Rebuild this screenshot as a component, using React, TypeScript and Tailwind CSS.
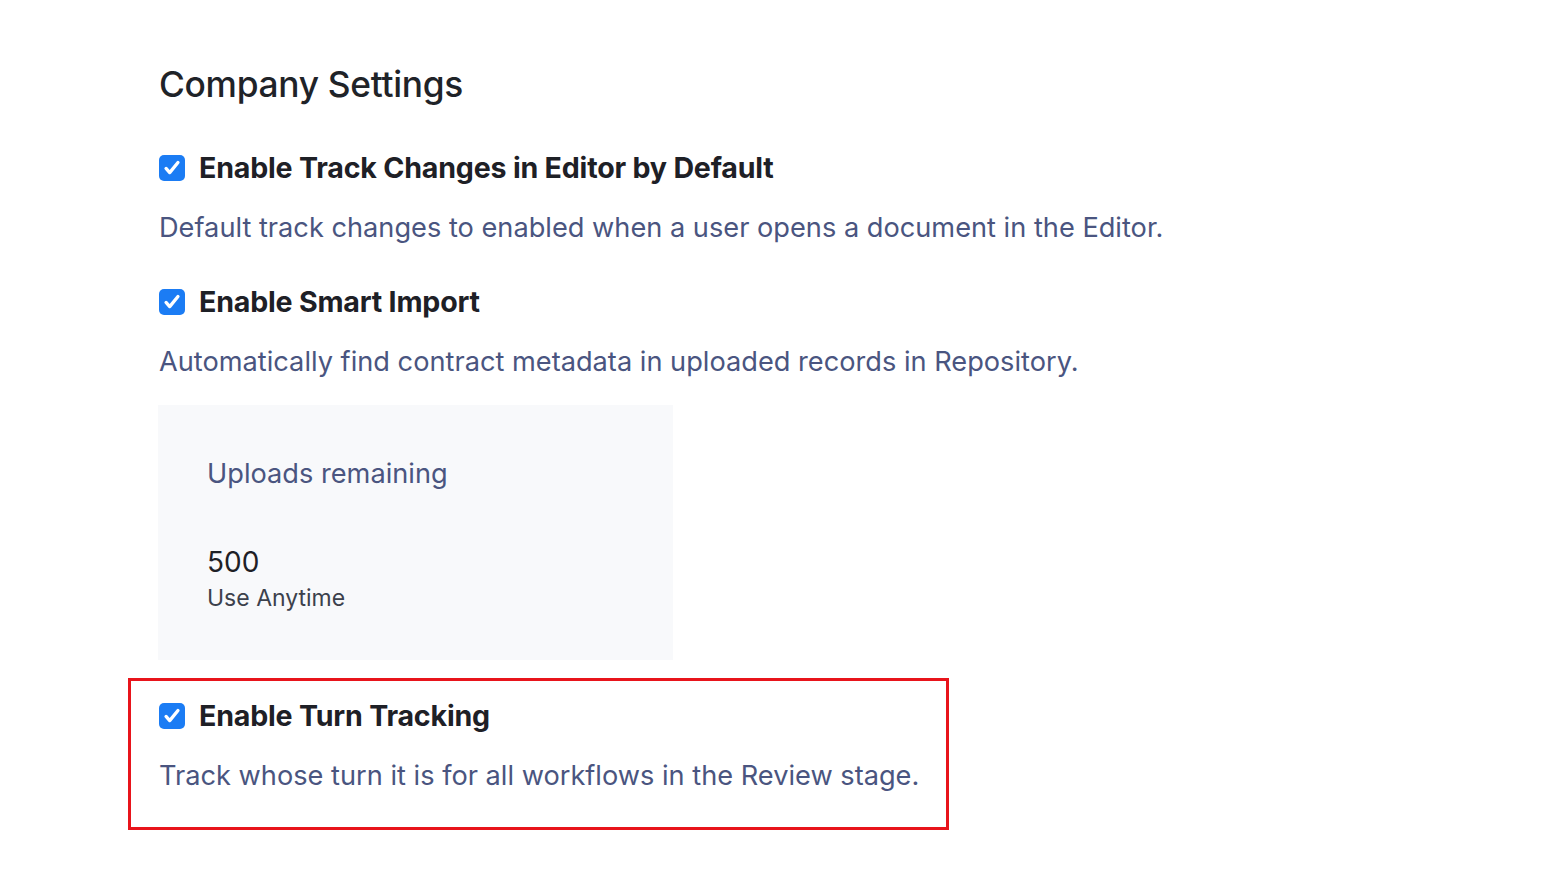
import React from "react";

function Check() {
  return (
    <span className="w-[26px] h-[26px] rounded-[5px] bg-[#1b7cf4] flex items-center justify-center shrink-0">
      <svg viewBox="0 0 24 24" className="w-[22px] h-[22px]" fill="none">
        <path
          d="M5.5 12.5l4 4.5L18.5 6"
          stroke="white"
          strokeWidth="3.6"
          strokeLinecap="round"
          strokeLinejoin="round"
        />
      </svg>
    </span>
  );
}

function Setting({ label, desc }: { label: string; desc: string }) {
  return (
    <div className="flex flex-col">
      <div className="flex items-center gap-[14px] h-[36px]">
        <Check />
        <span className="text-[28.6px] leading-[36px] font-bold text-[#1e2026] tracking-[-0.2px]">
          {label}
        </span>
      </div>
      <p className="mt-[24px] text-[27.2px] leading-[36px] text-[#4a5580]">
        {desc}
      </p>
    </div>
  );
}

export default function App() {
  return (
    <div className="min-h-screen bg-white font-['Inter',sans-serif] pl-[160px] pt-[65px]">
      <h1 className="text-[35.3px] leading-[40px] font-medium text-[#1f2328] tracking-[-0.3px] -ml-[1px]">
        Company Settings
      </h1>

      <div className="mt-[45px] -ml-[1px] flex flex-col gap-[38px]">
        <Setting
          label="Enable Track Changes in Editor by Default"
          desc="Default track changes to enabled when a user opens a document in the Editor."
        />
        <Setting
          label="Enable Smart Import"
          desc="Automatically find contract metadata in uploaded records in Repository."
        />
      </div>

      <div className="mt-[25px] -ml-[2px] w-[515px] h-[255px] bg-[#f8f9fb] pl-[49px] pt-[51px]">
        <p className="text-[27.2px] leading-[36px] text-[#4a5580]">
          Uploads remaining
        </p>
        <p className="mt-[52px] text-[28px] leading-[36px] text-[#1e2026]">500</p>
        <p className="text-[23px] leading-[36px] text-[#3c414c]">Use Anytime</p>
      </div>

      <div className="mt-[18px] -ml-[32px] w-[821px] border-[3px] border-[#e8141b] pl-[28px] pt-[17px] pb-[33px]">
        <Setting
          label="Enable Turn Tracking"
          desc="Track whose turn it is for all workflows in the Review stage."
        />
      </div>
    </div>
  );
}
